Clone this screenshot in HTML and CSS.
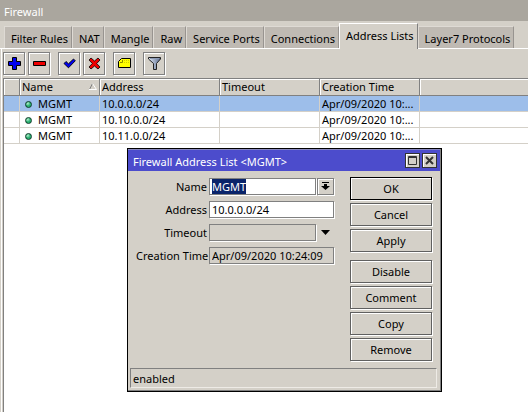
FILE: index.html
```html
<!DOCTYPE html>
<html lang="en">
<head>
  <meta charset="utf-8">
  <title>Firewall</title>
  <link rel="stylesheet" href="styles.css">
</head>
<body>
  <div class="window">
    <header class="window-title">Firewall</header>

    <nav class="tabs">
      <button type="button" class="tab">Filter Rules</button>
      <button type="button" class="tab">NAT</button>
      <button type="button" class="tab">Mangle</button>
      <button type="button" class="tab">Raw</button>
      <button type="button" class="tab">Service Ports</button>
      <button type="button" class="tab">Connections</button>
      <button type="button" class="tab active">Address Lists</button>
      <button type="button" class="tab">Layer7 Protocols</button>
    </nav>

    <main class="page">
      <div class="toolbar">
        <div class="tool-group">
          <button type="button" class="tool" aria-label="Add">
            <svg width="13" height="13" viewBox="0 0 13 13"><path d="M4.5 .5h4v4h4v4h-4v4h-4v-4h-4v-4h4z" fill="#0000f0" stroke="#000"/></svg>
          </button>
          <button type="button" class="tool" aria-label="Remove">
            <svg width="13" height="13" viewBox="0 0 13 13"><path d="M.5 4.5h12v4H.5z" fill="#f00000" stroke="#000"/></svg>
          </button>
        </div>
        <div class="tool-group">
          <button type="button" class="tool" aria-label="Enable">
            <svg width="13" height="13" viewBox="0 0 13 13"><path d="M1 6.500l2-2 2.500 2.300L10.500 2l1.800 1.800-6.800 7z" fill="#0000f0" stroke="#000" stroke-width=".9"/></svg>
          </button>
          <button type="button" class="tool" aria-label="Disable">
            <svg width="13" height="13" viewBox="0 0 13 13"><path d="M1 3l2-2 3.500 3L10 1l2 2-3.300 3.500L12 10l-2 2-3.500-3L3 12l-2-2 3.300-3.500z" fill="#f00000" stroke="#000" stroke-width=".8"/></svg>
          </button>
        </div>
        <div class="tool-group">
          <button type="button" class="tool" aria-label="Comment">
            <svg width="13" height="13" viewBox="0 0 13 13"><path d="M3.500 1.500h9v9H.500v-6z" fill="#ff0" stroke="#000"/><path d="M4.500 3v2.500H2" fill="none" stroke="#8a8a00"/><path d="M6 3.500h1M8 3.500h1M10 3.500h1M6 5.500h1M8 5.500h1M10 5.500h1" stroke="#d0d000"/></svg>
          </button>
        </div>
        <div class="tool-group">
          <button type="button" class="tool" aria-label="Filter">
            <svg width="13" height="13" viewBox="0 0 13 13"><defs><linearGradient id="steel"><stop offset="0" stop-color="#e4ecf8"/><stop offset="1" stop-color="#5a6c90"/></linearGradient></defs><path d="M.5 .5h12v1.500L8.500 6.500v6h-3v-6L.5 2z" fill="url(#steel)" stroke="#222"/><path d="M2 1.500h9" stroke="#8c9ab4"/></svg>
          </button>
        </div>
      </div>

      <div class="list">
        <table>
          <colgroup>
            <col class="col-flag"><col class="col-name"><col class="col-address"><col class="col-timeout"><col class="col-created"><col>
          </colgroup>
          <thead>
            <tr>
              <th></th>
              <th><span class="sorted">Name <svg width="8" height="7" viewBox="0 0 8 7"><path d="M.5 6.500L3.500 .5" stroke="#808080"/><path d="M3.500 .5l4 6H0" fill="none" stroke="#fff"/></svg></span></th>
              <th>Address</th>
              <th>Timeout</th>
              <th>Creation Time</th>
              <th></th>
            </tr>
          </thead>
          <tbody>
            <tr class="selected">
              <td></td><td><i class="dot"></i>MGMT</td><td>10.0.0.0/24</td><td></td><td>Apr/09/2020 10:...</td><td></td>
            </tr>
            <tr>
              <td></td><td><i class="dot"></i>MGMT</td><td>10.10.0.0/24</td><td></td><td>Apr/09/2020 10:...</td><td></td>
            </tr>
            <tr>
              <td></td><td><i class="dot"></i>MGMT</td><td>10.11.0.0/24</td><td></td><td>Apr/09/2020 10:...</td><td></td>
            </tr>
          </tbody>
        </table>
      </div>
    </main>
  </div>

  <form class="dialog">
    <header class="dialog-title">
      <span>Firewall Address List &lt;MGMT&gt;</span>
      <button type="button" class="caption" aria-label="Maximize">
        <svg width="9" height="9" viewBox="0 0 9 9"><path d="M.5 .5h8v8h-8zM0 1.500h9" fill="none" stroke="#333"/></svg>
      </button>
      <button type="button" class="caption" aria-label="Close">
        <svg width="9" height="9" viewBox="0 0 9 9"><path d="M1 1l7 7M8 1L1 8" stroke="#333" stroke-width="2"/></svg>
      </button>
    </header>

    <div class="dialog-body">
      <div class="fields">
        <label for="name">Name</label>
        <input type="text" id="name" value="MGMT" autofocus>
        <button type="button" class="drop" aria-label="Choose name">
          <svg width="9" height="9" viewBox="0 0 9 9"><path d="M1 0h7v1H1zM3 2h3v2h3L4.500 8 0 4h3z" fill="#000"/></svg>
        </button>

        <label for="address">Address</label>
        <input type="text" id="address" class="wide" value="10.0.0.0/24">

        <label for="timeout">Timeout</label>
        <input type="text" id="timeout" class="off">
        <button type="button" class="expand" aria-label="Set timeout">
          <svg width="9" height="5" viewBox="0 0 9 5"><path d="M0 0h9L4.500 5z" fill="#000"/></svg>
        </button>

        <label for="created">Creation Time</label>
        <input type="text" id="created" class="wide off" value="Apr/09/2020 10:24:09" readonly>
      </div>

      <div class="actions">
        <div class="action-group">
          <button type="button" class="action default">OK</button>
          <button type="button" class="action">Cancel</button>
          <button type="button" class="action">Apply</button>
        </div>
        <div class="action-group">
          <button type="button" class="action">Disable</button>
          <button type="button" class="action">Comment</button>
          <button type="button" class="action">Copy</button>
          <button type="button" class="action">Remove</button>
        </div>
      </div>
    </div>

    <footer class="status">enabled</footer>
  </form>

  <script>
    const nameInput = document.getElementById('name');
    nameInput.focus();
    nameInput.select();
  </script>
</body>
</html>
```
FILE: styles.css
```css
* {
  box-sizing: border-box;
}
body {
  margin: 0;
  background: #d4d0c8;
  color: #000;
  font-family: "Noto Sans", sans-serif;
  font-size: 11px;
  line-height: 16px;
}
button, input {
  margin: 0;
  padding: 0;
  border-radius: 0;
  color: inherit;
  font: inherit;
}
button {
  background: #d4d0c8;
}
svg {
  display: block;
}
.window {
  display: flex;
  flex-direction: column;
  height: 100vh;
}
.window-title {
  height: 21px;
  padding: 4px;
  background: #aaa69e;
  color: #fff;
}

/* tabs */
.tabs {
  display: flex;
  align-items: flex-end;
  height: 28px;
  padding-left: 4px;
  box-shadow: inset 0 -1px #fff;
}
.tab {
  height: 22px;
  margin-bottom: 1px;
  padding: 2px 3px 0 6px;
  border: 0;
  border-top: 1px solid #dedad4;
  border-left: 1px solid #dedad4;
  border-right: 1px solid #989490;
  background: #bfbab3;
  white-space: nowrap;
}
.tab.active {
  height: 26px;
  margin-bottom: 0;
  padding-bottom: 3px;
  border-color: #fff #808080 #fff #fff;
  background: #d4d0c8;
}

/* toolbar */
.page {
  display: flex;
  flex: 1;
  flex-direction: column;
  margin-left: 1px;
  padding-left: 1px;
  border-left: 1px solid #fff;
}
.toolbar {
  display: flex;
  gap: 8px;
  padding: 3px 0;
}
.tool-group {
  display: flex;
  gap: 3px;
}
.tool {
  display: flex;
  align-items: center;
  justify-content: center;
  width: 22px;
  height: 23px;
  border: 1px solid #808080;
  box-shadow: inset 1px 1px #fff, 1px 1px #fff;
}

/* address list */
.list {
  flex: 1;
  border: 1px solid #808080;
  border-width: 1px 0 0 1px;
  background: #fff;
}
table {
  width: 100%;
  border-collapse: separate;
  border-spacing: 0;
  table-layout: fixed;
}
.col-flag {
  width: 16px;
}
.col-name {
  width: 80px;
}
.col-address {
  width: 120px;
}
.col-timeout, .col-created {
  width: 100px;
}
th, td {
  height: 16px;
  padding: 0 0 0 2px;
  border-right: 1px solid #d4d0c8;
  border-bottom: 1px solid #d4d0c8;
  line-height: 15px;
  text-align: left;
  font-weight: normal;
  white-space: nowrap;
}
th {
  height: 17px;
  border-color: #808080;
  background: #d4d0c8;
  box-shadow: inset 1px 1px #fff;
  line-height: 16px;
}
th:last-child, td:last-child {
  border-right: 0;
}
.sorted {
  display: flex;
  justify-content: space-between;
  padding-right: 2px;
}
.sorted svg {
  margin-top: 4px;
}
.selected td {
  background: #9dbeea;
}
.dot {
  display: inline-block;
  width: 7px;
  height: 7px;
  margin: 0 6px 0 3px;
  border: 1px solid #0c3c28;
  border-radius: 50%;
  background: radial-gradient(circle at 35% 30%, #b8f0d0, #28b070 50%);
}

/* address dialog */
.dialog {
  position: absolute;
  top: 148px;
  left: 127px;
  width: 315px;
  padding: 1px 1px 3px 0;
  border: 1px solid #000;
  background: #d4d0c8;
  box-shadow: inset -1px -1px #808080, inset 0 1px #8888c0;
}
.dialog-title {
  display: flex;
  align-items: center;
  gap: 2px;
  height: 21px;
  padding: 0 3px 0 5px;
  background: #4c4ccc;
  color: #fff;
}
.dialog-title span {
  flex: 1;
  padding-top: 2px;
}
.caption {
  display: flex;
  align-items: center;
  justify-content: center;
  width: 15px;
  height: 15px;
  border: 1px solid #333;
  box-shadow: inset 1px 1px #fff;
}
.dialog-body {
  display: flex;
  justify-content: space-between;
  padding: 6px 8px 7px;
}
.fields {
  display: grid;
  grid-template-columns: 72px 107px 17px;
  grid-auto-rows: 17px;
  gap: 6px 1px;
  align-content: start;
  padding-top: 1px;
}
.fields label {
  padding-right: 1px;
  line-height: 18px;
  text-align: right;
  white-space: nowrap;
}
.fields input {
  width: 100%;
  min-width: 0;
  padding: 1px 2px 0;
  border: 1px solid #808080;
  outline: 0;
  background: #fff;
  box-shadow: 1px 1px #fff;
}
.fields .wide {
  grid-column: 2 / 4;
}
.fields .off {
  background: #d4d0c8;
}
.fields input::selection {
  background: #0a246a;
  color: #fff;
}
.drop, .expand {
  display: flex;
  align-items: center;
  justify-content: center;
  border: 1px solid #808080;
  box-shadow: inset 1px 1px #fff, 1px 1px #fff;
}
.expand {
  border-color: transparent;
  box-shadow: none;
}
.actions {
  display: flex;
  flex-direction: column;
  gap: 8px;
  width: 82px;
}
.action-group {
  display: flex;
  flex-direction: column;
  gap: 3px;
}
.action {
  height: 23px;
  padding-top: 1px;
  border: 1px solid #606060;
  box-shadow: inset 1px 1px #fff, 1px 1px #fff;
}
.action.default {
  border-color: #000;
}
.status {
  height: 20px;
  margin: 0 3px 0 2px;
  padding: 2px;
  border: 1px solid #808080;
  border-right-color: #eeebe6;
  border-bottom-color: #eeebe6;
}
```
